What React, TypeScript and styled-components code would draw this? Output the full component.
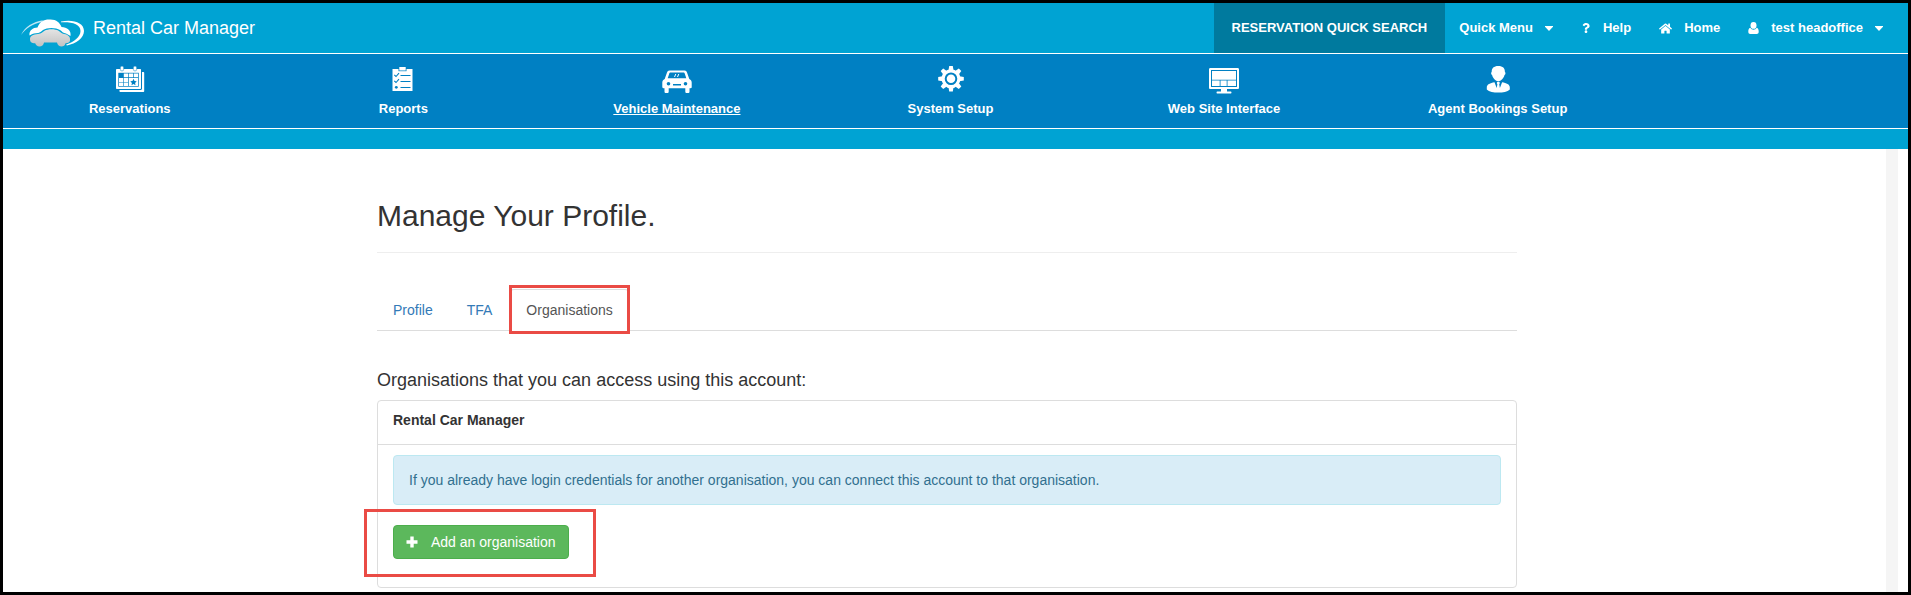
import React from "react";
import styled, { createGlobalStyle, css } from "styled-components";
import { FaHome, FaQuestion } from "react-icons/fa";

const GlobalStyle = createGlobalStyle`
  *, *::before, *::after { box-sizing: border-box; }
  body {
    margin: 0;
    background: #fff;
    color: #333;
    font-family: "Liberation Sans", Arial, sans-serif;
    font-size: 14px;
    line-height: 20px;
  }
`;

const Frame = styled.div`
  display: flex;
  flex-direction: column;
  min-height: 100vh;
  border: 3px solid #000;
  background: #fff;
`;

const TopBar = styled.header`
  display: flex;
  justify-content: space-between;
  height: 51px;
  background: #00a3d3;
  border-bottom: 1px solid #fff;
`;

const Brand = styled.a`
  display: flex;
  align-items: center;
  gap: 8px;
  padding: 0 0 1px 18px;
  color: #fff;
  font-size: 18px;
  text-decoration: none;
`;

const BrandLogo = styled.svg`
  margin-top: 8px;
`;

const TopNav = styled.nav`
  display: flex;
  padding-right: 11px;
`;

const topItem = css`
  display: flex;
  align-items: center;
  gap: 12px;
  padding: 0 14px;
  border: 0;
  background: none;
  color: #fff;
  font: bold 13px/20px "Liberation Sans", Arial, sans-serif;
  text-decoration: none;
  white-space: nowrap;
  cursor: pointer;
`;

const TopLink = styled.a`
  ${topItem}
`;

const TopButton = styled.button<{ $filled?: boolean }>`
  ${topItem}
  ${(p) =>
    p.$filled &&
    css`
      padding: 0 18px;
      background: #007a9e;
    `}
`;

const MainNav = styled.nav`
  background: #0080c3;
  border-bottom: 1px solid #fff;
  overflow: hidden;
`;

const NavGrid = styled.div`
  display: grid;
  grid-template-columns: repeat(7, 1fr);
  margin-left: -10px;
`;

const NavItem = styled.a<{ $active?: boolean }>`
  display: flex;
  flex-direction: column;
  align-items: center;
  gap: 5px;
  padding: 11px 0 10px;
  color: #fff;
  font-size: 13px;
  font-weight: bold;
  line-height: 18px;
  text-decoration: ${(p) => (p.$active ? "underline" : "none")};
`;

const Band = styled.div`
  height: 20px;
  background: #00a3d3;
`;

const Body = styled.div`
  display: flex;
  flex: 1;
`;

const Gutter = styled.div`
  width: 22px;
  border-left: 12px solid #f5f5f5;
`;

const Main = styled.main`
  flex: 1;
  padding: 50px 0 4px 5px;
`;

const Container = styled.div`
  max-width: 1140px;
  margin: 0 auto;
`;

const Title = styled.h1`
  margin: 0 0 36px;
  padding-bottom: 20px;
  border-bottom: 1px solid #eee;
  font-size: 30px;
  font-weight: normal;
  line-height: 33px;
`;

const Tabs = styled.div`
  display: flex;
  gap: 2px;
  margin-bottom: 39px;
  border-bottom: 1px solid #ddd;
`;

const Tab = styled.button<{ $active?: boolean }>`
  position: relative;
  margin: 0 0 -1px;
  padding: 10px 15px;
  border: 1px solid transparent;
  border-radius: 4px 4px 0 0;
  background: none;
  color: #337ab7;
  font: inherit;
  cursor: pointer;
  ${(p) =>
    p.$active &&
    css`
      color: #555;
      background: #fff;
      border-color: #ddd #ddd transparent;
    `}
`;

const Highlight = styled.span<{ $inset: string }>`
  position: absolute;
  inset: ${(p) => p.$inset};
  border: 3px solid #ea4b45;
  pointer-events: none;
`;

const SectionTitle = styled.h2`
  margin: 0 0 10px;
  font-size: 18px;
  font-weight: normal;
  line-height: 20px;
`;

const Panel = styled.section`
  border: 1px solid #ddd;
  border-radius: 4px;
`;

const PanelHeading = styled.h3`
  margin: 0;
  padding: 9px 15px 14px;
  border-bottom: 1px solid #ddd;
  font-size: 14px;
  line-height: 20px;
`;

const PanelBody = styled.div`
  padding: 10px 15px 28px;
`;

const Alert = styled.p`
  margin: 0 0 20px;
  padding: 14px 15px;
  border: 1px solid #bce8f1;
  border-radius: 4px;
  background: #d9edf7;
  color: #31708f;
`;

const AddButton = styled.button`
  position: relative;
  display: flex;
  align-items: center;
  gap: 13px;
  padding: 6px 12px;
  border: 1px solid #4cae4c;
  border-radius: 4px;
  background: #5cb85c;
  color: #fff;
  font: inherit;
  cursor: pointer;
`;

const Caret = () => (
  <svg width="8" height="5" viewBox="0 0 8 5" fill="currentColor" aria-hidden="true">
    <path d="M0 0h8v.8L4 5 0 .8z" />
  </svg>
);

const PlusIcon = () => (
  <svg width="12" height="12" viewBox="0 0 12 12" fill="currentColor" aria-hidden="true">
    <path d="M4.300.5h3.400v3.800h3.800v3.400H7.700v3.800H4.300V7.700H.5V4.300h3.800z" />
  </svg>
);

const UserIcon = () => (
  <svg width="11" height="12" viewBox="0 0 11 12" fill="currentColor" aria-hidden="true">
    <ellipse cx="5.500" cy="3.400" rx="3" ry="3.400" />
    <path d="M2.300 5.800C.7 6.300.3 8 .3 9.800c0 1.500.8 2.200 2 2.200h6.400c1.200 0 2-.7 2-2.200 0-1.800-.4-3.500-2-4-.8 1.300-1.900 1.900-3.200 1.900s-2.400-.6-3.200-1.900z" />
  </svg>
);

const Logo = () => (
  <BrandLogo width="64" height="30" viewBox="0 0 64 30" aria-hidden="true">
    <defs>
      <linearGradient id="body" x1="0" y1="0" x2="0" y2="1">
        <stop offset="0" stopColor="#e4e4e4" />
        <stop offset="1" stopColor="#c2c2c2" />
      </linearGradient>
    </defs>
    <path d="M0 18C4 9.500 12 5 22 3.300l-1 1.500C12 7 5 11 0 18z" fill="#bfe7f4" />
    <path d="M40 4.500C52 2 63 5.500 63 14c0 7-8 12.500-17 14.500l-1-.8c8-2.700 14.500-7.700 14.500-13.700C59.500 7 51 4.800 40 5.300z" fill="#fff" />
    <path d="M8.500 18.500c-.8-5 3.500-8 8-8C18.500 4.500 23.500 2 29.500 2.500c6 0 9.500 3.500 11 7.500 5.500 0 10 3.500 9 9l-4.500-2.500c-3-.5-4-2-6-3.500-4-2.700-13-2.800-17 0-2 1.700-3.500 3-7 3.300-3 .3-4.500 1-6.500 2.200z" fill="#fff" />
    <path d="M9 22c0-3 3-4.500 8-5 3.500-.4 4.500-2 6.500-3.200 3.500-2 10.500-2 14 0 2 1.200 3.200 2.800 5.500 3.200 4.500.8 6.500 3 6 6.500-.3 2-1.500 2.700-4.500 2.800-.5 2.200-2 3.200-4 3.200s-4-1.500-4.500-4H23c-.5 2.500-2.200 4-4.500 4s-3.700-1.200-4.300-3.200C10.500 26.300 9 25 9 22z" fill="url(#body)" />
  </BrandLogo>
);

const NavIcon = ({ children }: { children: React.ReactNode }) => (
  <svg width="30" height="30" viewBox="0 0 30 30" fill="#fff" aria-hidden="true">
    {children}
  </svg>
);

const BLUE = "#0080c3";

const CalendarIcon = () => (
  <NavIcon>
    <path d="M27 7h1.200c.7 0 1 .4 1 1v18c0 .7-.4 1-1 1H5.500c-.7 0-1-.3-1-1v-1.100h21.300c.8 0 1.200-.4 1.200-1.200z" />
    <path d="M2.500 4H25c.7 0 1 .4 1 1v18c0 .7-.3 1-1 1H2c-.7 0-1-.3-1-1V5c0-.6.4-1 1.500-1z" />
    <path d="M3.300 7.800h20.500v13.900H3.300z" fill={BLUE} />
    <path d="M5.300 4.300V2.700a1.700 1.700 0 013.400 0v1.600a1.700 1.700 0 01-3.400 0zM18.300 4.300V2.700a1.700 1.700 0 013.400 0v1.600a1.700 1.700 0 01-3.400 0z" stroke={BLUE} strokeWidth=".5" />
    <path d="M8.800 8.400h4.300v3.900H8.800zM13.800 8.400h4.300v3.900h-4.300zM18.800 8.400h4.300v3.900h-4.300zM4 13h4.200v3.900H4zM8.800 13h4.300v3.900H8.800zM4 17.600h4.200V21H4zM8.800 17.600h4.300V21H8.800zM13.800 13h9.300v8h-9.300z" />
    <path d="M18.500 13.800l1 2.200 2.200.3-1.600 1.600.4 2.300-2-1.100-2 1.100.4-2.300-1.600-1.600 2.200-.3z" fill={BLUE} />
  </NavIcon>
);

const ChecklistIcon = () => (
  <NavIcon>
    <path d="M4.500 4h20v22h-20z" />
    <path d="M10.500 3.500h8v2.700h-8z" fill={BLUE} />
    <path d="M11.300 2h6.400v3.500h-6.400z" />
    <path d="M12.500 10.500h10M12.500 16.500h10M12.500 22.500h10" stroke={BLUE} strokeWidth="1" />
    <path d="M6.300 9.800l1.700 1.700 3-3.400M6.300 15.800l1.700 1.700 3-3.400" stroke={BLUE} strokeWidth="1.100" fill="none" />
    <circle cx="8.300" cy="22.300" r="1.400" fill={BLUE} />
  </NavIcon>
);

const CarIcon = () => (
  <NavIcon>
    <path d="M7.500 5.500h15c1.500 0 2 .7 2.500 2l2.300 6.500c1.700.8 2.400 2 2.400 3.500v4.500c0 .8-.4 1.200-1.200 1.200h-1v3.300c0 1-.5 1.500-1.500 1.500h-1.200c-1 0-1.500-.5-1.500-1.500v-3.300H6.700v3.300c0 1-.5 1.500-1.500 1.500H4c-1 0-1.500-.5-1.500-1.500v-3.300h-1c-.8 0-1.200-.4-1.200-1.200v-4.500c0-1.500.7-2.700 2.400-3.500L5 7.500c.5-1.300 1-2 2.500-2z" />
    <path d="M8.500 7.500h13c.7 0 .9.300 1.200 1l1.600 4.800H5.700l1.600-4.800c.3-.7.500-1 1.200-1z" fill={BLUE} />
    <path d="M13.800 9l-1.300 3M16.800 9l-1.300 3" stroke="#fff" />
    <circle cx="6.500" cy="18.700" r="1.800" fill={BLUE} />
    <circle cx="23.500" cy="18.700" r="1.800" fill={BLUE} />
    <path d="M11 19h8v1.500h-8z" fill={BLUE} />
  </NavIcon>
);

const GearIcon = () => (
  <NavIcon>
    <g transform="translate(16 13.700)">
      <circle r="9.500" />
      {[0, 45, 90, 135, 180, 225, 270, 315].map((a) => (
        <path key={a} d="M-2.500-8.500l.7-4.300h3.600l.7 4.300z" transform={`rotate(${a})`} />
      ))}
      <circle r="5.300" fill="none" stroke={BLUE} strokeWidth="2" />
    </g>
  </NavIcon>
);

const MonitorIcon = () => (
  <NavIcon>
    <path d="M1.500 3h27c1 0 1.500.5 1.500 1.500v18c0 1-.5 1.500-1.500 1.500H18v2.500h3.500c.7 0 1 .5 1 1s-.3 1-1 1h-13c-.7 0-1-.5-1-1s.3-1 1-1H12V24H1.500C.5 24 0 23.500 0 22.500v-18C0 3.500.5 3 1.500 3z" />
    <path d="M2 5h26v17H2z" fill={BLUE} />
    <path d="M3 6h24v8.700H3zM3 15.500h7.700V21H3zM11.500 15.500h6.200V21h-6.200zM18.500 15.500H27V21h-8.500z" />
  </NavIcon>
);

const AgentIcon = () => (
  <NavIcon>
    <path d="M15.300 1c4.600 0 6.700 2.300 6.600 6 .9.400.7 2.500-.4 3-.7 3.200-3.400 6.200-6.200 6.200S9.800 13.200 9.100 10c-1.100-.5-1.300-2.600-.4-3C8.600 3.300 10.700 1 15.300 1z" />
    <path d="M11.500 17.300l2.200 5.700.7-3.700-.7-1.300.7-1.200h1.800l.7 1.200-.7 1.300.7 3.700 2.200-5.700c4.200.8 7.700 2 7.700 5.200v2c-2.300 2.300-7 3.100-11.500 3.100s-9.200-.8-11.500-3.100v-2c0-3.200 3.500-4.400 7.700-5.200z" />
  </NavIcon>
);

const navItems = [
  { label: "Reservations", Icon: CalendarIcon },
  { label: "Reports", Icon: ChecklistIcon },
  { label: "Vehicle Maintenance", Icon: CarIcon, active: true },
  { label: "System Setup", Icon: GearIcon },
  { label: "Web Site Interface", Icon: MonitorIcon },
  { label: "Agent Bookings Setup", Icon: AgentIcon },
];

export default function App() {
  return (
    <>
      <GlobalStyle />
      <Frame>
        <TopBar>
          <Brand href="#">
            <Logo />
            Rental Car Manager
          </Brand>
          <TopNav>
            <TopButton $filled>RESERVATION QUICK SEARCH</TopButton>
            <TopButton>
              Quick Menu
              <Caret />
            </TopButton>
            <TopLink href="#">
              <FaQuestion size={10} />
              Help
            </TopLink>
            <TopLink href="#">
              <FaHome size={13} />
              Home
            </TopLink>
            <TopButton>
              <UserIcon />
              test headoffice
              <Caret />
            </TopButton>
          </TopNav>
        </TopBar>
        <MainNav>
          <NavGrid>
            {navItems.map(({ label, Icon, active }) => (
              <NavItem key={label} href="#" $active={active}>
                <Icon />
                {label}
              </NavItem>
            ))}
          </NavGrid>
        </MainNav>
        <Band />
        <Body>
          <Main>
            <Container>
              <Title>Manage Your Profile.</Title>
              <Tabs role="tablist">
                <Tab role="tab">Profile</Tab>
                <Tab role="tab">TFA</Tab>
                <Tab role="tab" aria-selected="true" $active>
                  Organisations
                  <Highlight $inset="-5px -2px -4px -2px" />
                </Tab>
              </Tabs>
              <SectionTitle>Organisations that you can access using this account:</SectionTitle>
              <Panel>
                <PanelHeading>Rental Car Manager</PanelHeading>
                <PanelBody>
                  <Alert>
                    If you already have login credentials for another organisation, you can connect this account to
                    that organisation.
                  </Alert>
                  <AddButton>
                    <PlusIcon />
                    Add an organisation
                    <Highlight $inset="-17px -28px -19px -30px" />
                  </AddButton>
                </PanelBody>
              </Panel>
            </Container>
          </Main>
          <Gutter />
        </Body>
      </Frame>
    </>
  );
}
